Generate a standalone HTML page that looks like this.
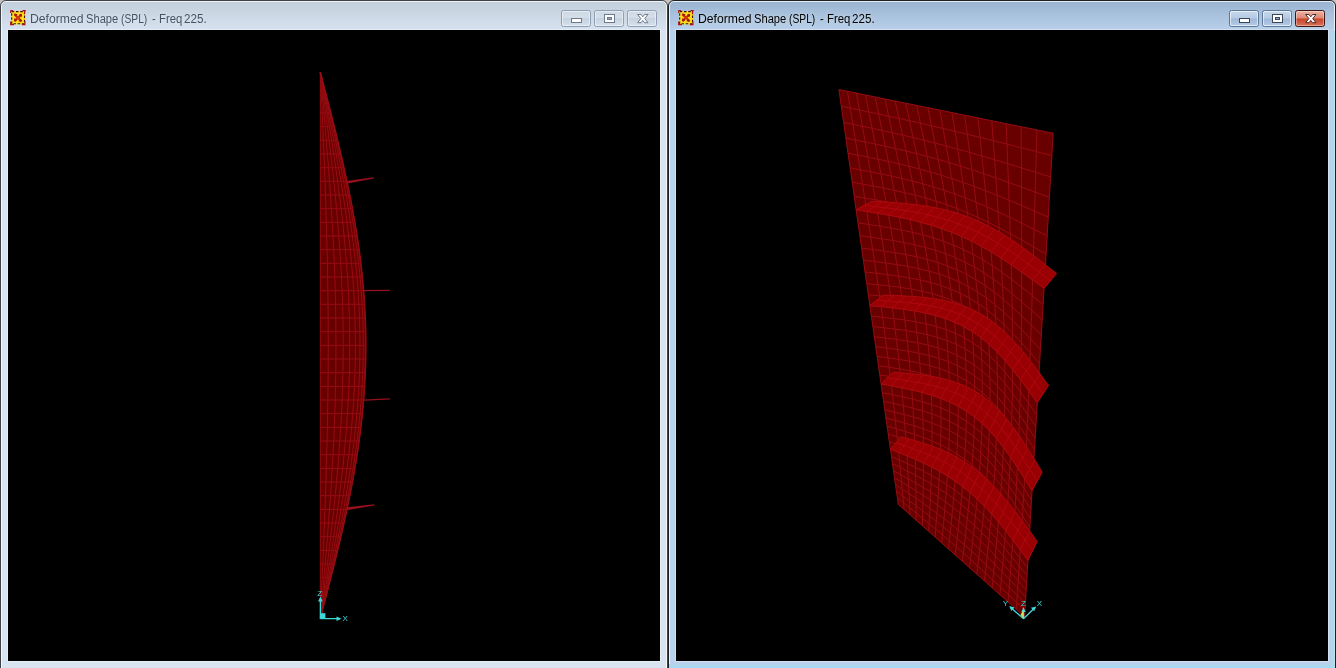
<!DOCTYPE html>
<html>
<head>
<meta charset="utf-8">
<title>Deformed Shape (SPL) - Freq 225.</title>
<style>
html,body{margin:0;padding:0;}
body{width:1336px;height:668px;overflow:hidden;background:#c4c2be;position:relative;font-family:"Liberation Sans",sans-serif;}
.win{position:absolute;top:0;width:668px;height:680px;box-sizing:border-box;border:1px solid #3f4349;border-radius:6px 6px 0 0;overflow:hidden;}
.win .hl{position:absolute;left:0;top:0;right:0;bottom:0;border:1px solid rgba(255,255,255,.75);border-radius:5px 5px 0 0;pointer-events:none;}
#w1{left:0;background:linear-gradient(#c3cfdb 0px,#c3cfdb 2px,#d6e2ef 29px,#d9e4f1 30px,#d9e4f1 100%);}
#w2{left:668px;border-color:#1e2124;background:linear-gradient(#9cb5d2 0px,#9cb5d2 2px,#b8d0ea 29px,#b9d1ea 30px,#b9d1ea 100%);}
.view{position:absolute;left:7px;top:29px;width:652px;height:631px;background:#000;box-shadow:0 0 0 1px rgba(255,255,255,.35);}
.view svg{position:absolute;left:0;top:0;}
.ticon{position:absolute;left:8.4px;top:8px;width:17.6px;height:17px;}
.title{position:absolute;left:0;top:10px;height:16px;line-height:16px;font-size:12px;white-space:nowrap;will-change:transform;}
.title span{position:absolute;top:0;display:block;transform-origin:0 0;white-space:pre;}
#w1 .title{color:#445364;text-shadow:0 0 5px rgba(255,255,255,.55);}
#w2 .title{color:#000;text-shadow:0 0 5px rgba(255,255,255,.55);}
.btn{position:absolute;top:9px;width:30px;height:17px;box-sizing:border-box;border:1px solid #8f9fb3;border-radius:2.5px;box-shadow:inset 0 0 0 1px rgba(255,255,255,.45);}
.btn svg{position:absolute;left:0;top:0;}
#w1 .btn{background:linear-gradient(rgba(255,255,255,.12) 0,rgba(255,255,255,.12) 50%,rgba(120,140,170,.10) 50%,rgba(255,255,255,.05) 100%);}
#w2 .btn{border-color:#5d7796;background:linear-gradient(#c4d7ec 0,#b6cbe4 48%,#9fb8d6 52%,#b4cbe6 100%);box-shadow:inset 0 0 0 1px rgba(255,255,255,.6);}
#w2 .btn.close{border-color:#431512;background:linear-gradient(#eab2a4 0,#df8874 48%,#c7432a 52%,#d9735a 100%);box-shadow:inset 0 0 0 1px rgba(255,255,255,.35);}
.b1{left:560px}.b2{left:593px}.b3{left:626px}
#w2 .edge{position:absolute;left:0;right:0;top:663px;height:6px;background:linear-gradient(#b9d1ea,#9edcf3 60%,#9edcf3);}
#w2 .redge{position:absolute;right:0;top:30px;width:5px;height:640px;background:linear-gradient(90deg,rgba(170,222,236,0),rgba(170,222,236,.9));}
</style>
</head>
<body>
<div class="win" id="w1">
  <div class="hl"></div>
  <svg class="ticon" viewBox="0 0 17 17" preserveAspectRatio="none"><rect x="2" y="2" width="13.6" height="13.4" fill="#ffdf1e"/>
<rect x="2.6" y="2.6" width="12.4" height="12.2" fill="none" stroke="#3c1200" stroke-width="1.1" stroke-dasharray="2.5 1.6"/>
<path d="M1.4 1.6h2.6M1.6 1.4v2.6M13 1.6h3.2M15 1.6v3.6M1.6 12.6v3h3.2M15.4 12.4v3.2h-3" stroke="#a81018" stroke-width="1.1" fill="none"/>
<path d="M5.2 5.2 L12.2 12.2 M12.2 5.2 L5.2 12.2" stroke="#c42806" stroke-width="2.1" fill="none"/>
<path d="M5 4.6l3.4 .6-2.6 2.4zM12.6 5l-.6 3.4-2.4-2.6zM12.2 12.8l-3.4-.6 2.6-2.4zM4.8 12.2l.6-3.4 2.4 2.6z" fill="#a01400"/>
<circle cx="8.7" cy="8.7" r="1.3" fill="#d83c10"/></svg>
  <div class="title"><span style="left:28.99px;transform:scaleX(1.016)">Deformed </span><span style="left:84.52px;transform:scaleX(0.929)">Shape </span><span style="left:119.76px;transform:scaleX(0.857)">(SPL) </span><span style="left:151.25px;transform:scaleX(0.938)">- </span><span style="left:158.03px;transform:scaleX(0.946)">Freq </span><span style="left:183.29px;transform:scaleX(0.969)">225.</span></div>
  <div class="btn b1"><svg width="28" height="15" viewBox="0 0 28 15"><rect x="9.5" y="7.5" width="10" height="4" fill="#fff" stroke="#6d7a8c" stroke-width="1"/></svg></div>
  <div class="btn b2"><svg width="28" height="15" viewBox="0 0 28 15"><rect x="9.5" y="3.5" width="10" height="8" fill="#fff" stroke="#6d7a8c" stroke-width="1"/><rect x="12.5" y="6.5" width="4" height="2" fill="#9aa9bd" stroke="#6d7a8c" stroke-width="1"/></svg></div>
  <div class="btn b3 close"><svg width="28" height="15" viewBox="0 0 28 15"><path d="M9.6 3.5 L13 3.5 L14.8 5.8 L16.6 3.5 L20 3.5 L16.7 7.6 L20 11.7 L16.6 11.7 L14.8 9.4 L13 11.7 L9.6 11.7 L12.9 7.6 Z" fill="#fff" stroke="#6d7a8c" stroke-width="1" stroke-linejoin="round"/></svg></div>
  <div class="view"><svg width="652" height="631" viewBox="0 0 652 631">
<polygon points="312.3,588.7 312.3,581.9 312.3,575.0 312.3,568.2 312.3,561.4 312.3,554.5 312.3,547.7 312.3,540.9 312.3,534.0 312.3,527.2 312.3,520.4 312.3,513.5 312.3,506.7 312.3,499.9 312.3,493.0 312.3,486.2 312.3,479.4 312.3,472.5 312.3,465.7 312.3,458.9 312.3,452.0 312.3,445.2 312.3,438.4 312.3,431.5 312.3,424.7 312.3,417.9 312.3,411.0 312.3,404.2 312.3,397.4 312.3,390.5 312.3,383.7 312.3,376.9 312.3,370.0 312.3,363.2 312.3,356.4 312.3,349.5 312.3,342.7 312.3,335.9 312.3,329.0 312.3,322.2 312.3,315.4 312.3,308.5 312.3,301.7 312.3,294.8 312.3,288.0 312.3,281.2 312.3,274.3 312.3,267.5 312.3,260.7 312.3,253.8 312.3,247.0 312.3,240.2 312.3,233.3 312.3,226.5 312.3,219.7 312.3,212.8 312.3,206.0 312.3,199.2 312.3,192.3 312.3,185.5 312.3,178.7 312.3,171.8 312.3,165.0 312.3,158.2 312.3,151.3 312.3,144.5 312.3,137.7 312.3,130.8 312.3,124.0 312.3,117.2 312.3,110.3 312.3,103.5 312.3,96.7 312.3,89.8 312.3,83.0 312.3,76.2 312.3,69.3 312.3,62.5 312.3,55.7 312.3,48.8 312.3,42.0 312.3,42.0 314.1,48.8 315.9,55.7 317.7,62.5 319.5,69.3 321.2,76.2 323.0,83.0 324.7,89.8 326.5,96.7 328.2,103.5 329.8,110.3 331.5,117.2 333.1,124.0 334.7,130.8 336.2,137.7 337.7,144.5 339.2,151.3 340.7,158.2 342.0,165.0 343.4,171.8 344.7,178.7 345.9,185.5 347.1,192.3 348.3,199.2 349.4,206.0 350.4,212.8 351.4,219.7 352.3,226.5 353.1,233.3 353.9,240.2 354.6,247.0 355.3,253.8 355.9,260.7 356.4,267.5 356.8,274.3 357.2,281.2 357.5,288.0 357.8,294.8 358.0,301.7 358.1,308.5 358.1,315.4 358.1,322.2 358.0,329.0 357.8,335.9 357.5,342.7 357.2,349.5 356.8,356.4 356.4,363.2 355.9,370.0 355.3,376.9 354.6,383.7 353.9,390.5 353.1,397.4 352.3,404.2 351.4,411.0 350.4,417.9 349.4,424.7 348.3,431.5 347.1,438.4 345.9,445.2 344.7,452.0 343.4,458.9 342.0,465.7 340.7,472.5 339.2,479.4 337.7,486.2 336.2,493.0 334.7,499.9 333.1,506.7 331.5,513.5 329.8,520.4 328.2,527.2 326.5,534.0 324.7,540.9 323.0,547.7 321.2,554.5 319.5,561.4 317.7,568.2 315.9,575.0 314.1,581.9 312.3,588.7" fill="#690000"/>
<path d="M312.3,588.7 L312.3,575.0 L312.3,561.4 L312.3,547.7 L312.3,534.0 L312.3,520.4 L312.3,506.7 L312.3,493.0 L312.3,479.4 L312.3,465.7 L312.3,452.0 L312.3,438.4 L312.3,424.7 L312.3,411.0 L312.3,397.4 L312.3,383.7 L312.3,370.0 L312.3,356.4 L312.3,342.7 L312.3,329.0 L312.3,315.4 L312.3,301.7 L312.3,288.0 L312.3,274.3 L312.3,260.7 L312.3,247.0 L312.3,233.3 L312.3,219.7 L312.3,206.0 L312.3,192.3 L312.3,178.7 L312.3,165.0 L312.3,151.3 L312.3,137.7 L312.3,124.0 L312.3,110.3 L312.3,96.7 L312.3,83.0 L312.3,69.3 L312.3,55.7 L312.3,42.0 M312.3,588.7 L312.9,575.0 L313.5,561.4 L314.2,547.7 L314.8,534.0 L315.3,520.4 L315.9,506.7 L316.5,493.0 L317.0,479.4 L317.5,465.7 L317.9,452.0 L318.3,438.4 L318.7,424.7 L319.1,411.0 L319.4,397.4 L319.6,383.7 L319.9,370.0 L320.0,356.4 L320.2,342.7 L320.2,329.0 L320.3,315.4 L320.2,301.7 L320.2,288.0 L320.0,274.3 L319.9,260.7 L319.6,247.0 L319.4,233.3 L319.1,219.7 L318.7,206.0 L318.3,192.3 L317.9,178.7 L317.5,165.0 L317.0,151.3 L316.5,137.7 L315.9,124.0 L315.3,110.3 L314.8,96.7 L314.2,83.0 L313.5,69.3 L312.9,55.7 L312.3,42.0 M312.3,588.7 L313.5,575.0 L314.8,561.4 L316.0,547.7 L317.1,534.0 L318.3,520.4 L319.4,506.7 L320.5,493.0 L321.5,479.4 L322.5,465.7 L323.4,452.0 L324.2,438.4 L325.0,424.7 L325.7,411.0 L326.3,397.4 L326.8,383.7 L327.2,370.0 L327.5,356.4 L327.8,342.7 L327.9,329.0 L328.0,315.4 L327.9,301.7 L327.8,288.0 L327.5,274.3 L327.2,260.7 L326.8,247.0 L326.3,233.3 L325.7,219.7 L325.0,206.0 L324.2,192.3 L323.4,178.7 L322.5,165.0 L321.5,151.3 L320.5,137.7 L319.4,124.0 L318.3,110.3 L317.1,96.7 L316.0,83.0 L314.8,69.3 L313.5,55.7 L312.3,42.0 M312.3,588.7 L314.1,575.0 L315.9,561.4 L317.6,547.7 L319.4,534.0 L321.1,520.4 L322.7,506.7 L324.3,493.0 L325.8,479.4 L327.2,465.7 L328.5,452.0 L329.7,438.4 L330.8,424.7 L331.8,411.0 L332.7,397.4 L333.5,383.7 L334.1,370.0 L334.6,356.4 L334.9,342.7 L335.1,329.0 L335.2,315.4 L335.1,301.7 L334.9,288.0 L334.6,274.3 L334.1,260.7 L333.5,247.0 L332.7,233.3 L331.8,219.7 L330.8,206.0 L329.7,192.3 L328.5,178.7 L327.2,165.0 L325.8,151.3 L324.3,137.7 L322.7,124.0 L321.1,110.3 L319.4,96.7 L317.6,83.0 L315.9,69.3 L314.1,55.7 L312.3,42.0 M312.3,588.7 L314.6,575.0 L316.9,561.4 L319.2,547.7 L321.4,534.0 L323.6,520.4 L325.7,506.7 L327.7,493.0 L329.6,479.4 L331.4,465.7 L333.1,452.0 L334.7,438.4 L336.1,424.7 L337.4,411.0 L338.5,397.4 L339.5,383.7 L340.3,370.0 L340.9,356.4 L341.4,342.7 L341.6,329.0 L341.7,315.4 L341.6,301.7 L341.4,288.0 L340.9,274.3 L340.3,260.7 L339.5,247.0 L338.5,233.3 L337.4,219.7 L336.1,206.0 L334.7,192.3 L333.1,178.7 L331.4,165.0 L329.6,151.3 L327.7,137.7 L325.7,124.0 L323.6,110.3 L321.4,96.7 L319.2,83.0 L316.9,69.3 L314.6,55.7 L312.3,42.0 M312.3,588.7 L315.1,575.0 L317.8,561.4 L320.5,547.7 L323.1,534.0 L325.7,520.4 L328.2,506.7 L330.6,493.0 L332.9,479.4 L335.1,465.7 L337.1,452.0 L339.0,438.4 L340.7,424.7 L342.2,411.0 L343.6,397.4 L344.7,383.7 L345.7,370.0 L346.4,356.4 L347.0,342.7 L347.3,329.0 L347.4,315.4 L347.3,301.7 L347.0,288.0 L346.4,274.3 L345.7,260.7 L344.7,247.0 L343.6,233.3 L342.2,219.7 L340.7,206.0 L339.0,192.3 L337.1,178.7 L335.1,165.0 L332.9,151.3 L330.6,137.7 L328.2,124.0 L325.7,110.3 L323.1,96.7 L320.5,83.0 L317.8,69.3 L315.1,55.7 L312.3,42.0 M312.3,588.7 L315.4,575.0 L318.5,561.4 L321.6,547.7 L324.6,534.0 L327.5,520.4 L330.3,506.7 L333.0,493.0 L335.6,479.4 L338.1,465.7 L340.3,452.0 L342.5,438.4 L344.4,424.7 L346.1,411.0 L347.6,397.4 L348.9,383.7 L350.0,370.0 L350.9,356.4 L351.5,342.7 L351.8,329.0 L352.0,315.4 L351.8,301.7 L351.5,288.0 L350.9,274.3 L350.0,260.7 L348.9,247.0 L347.6,233.3 L346.1,219.7 L344.4,206.0 L342.5,192.3 L340.3,178.7 L338.1,165.0 L335.6,151.3 L333.0,137.7 L330.3,124.0 L327.5,110.3 L324.6,96.7 L321.6,83.0 L318.5,69.3 L315.4,55.7 L312.3,42.0 M312.3,588.7 L315.7,575.0 L319.0,561.4 L322.3,547.7 L325.6,534.0 L328.8,520.4 L331.8,506.7 L334.8,493.0 L337.6,479.4 L340.3,465.7 L342.7,452.0 L345.0,438.4 L347.1,424.7 L349.0,411.0 L350.6,397.4 L352.1,383.7 L353.2,370.0 L354.1,356.4 L354.8,342.7 L355.2,329.0 L355.3,315.4 L355.2,301.7 L354.8,288.0 L354.1,274.3 L353.2,260.7 L352.1,247.0 L350.6,233.3 L349.0,219.7 L347.1,206.0 L345.0,192.3 L342.7,178.7 L340.3,165.0 L337.6,151.3 L334.8,137.7 L331.8,124.0 L328.8,110.3 L325.6,96.7 L322.3,83.0 L319.0,69.3 L315.7,55.7 L312.3,42.0 M312.3,588.7 L315.8,575.0 L319.4,561.4 L322.8,547.7 L326.2,534.0 L329.6,520.4 L332.8,506.7 L335.9,493.0 L338.8,479.4 L341.6,465.7 L344.2,452.0 L346.6,438.4 L348.8,424.7 L350.8,411.0 L352.5,397.4 L354.0,383.7 L355.2,370.0 L356.2,356.4 L356.8,342.7 L357.3,329.0 L357.4,315.4 L357.3,301.7 L356.8,288.0 L356.2,274.3 L355.2,260.7 L354.0,247.0 L352.5,233.3 L350.8,219.7 L348.8,206.0 L346.6,192.3 L344.2,178.7 L341.6,165.0 L338.8,151.3 L335.9,137.7 L332.8,124.0 L329.6,110.3 L326.2,96.7 L322.8,83.0 L319.4,69.3 L315.8,55.7 L312.3,42.0 M312.3,588.7 L315.9,575.0 L319.5,561.4 L323.0,547.7 L326.5,534.0 L329.8,520.4 L333.1,506.7 L336.2,493.0 L339.2,479.4 L342.0,465.7 L344.7,452.0 L347.1,438.4 L349.4,424.7 L351.4,411.0 L353.1,397.4 L354.6,383.7 L355.9,370.0 L356.8,356.4 L357.5,342.7 L358.0,329.0 L358.1,315.4 L358.0,301.7 L357.5,288.0 L356.8,274.3 L355.9,260.7 L354.6,247.0 L353.1,233.3 L351.4,219.7 L349.4,206.0 L347.1,192.3 L344.7,178.7 L342.0,165.0 L339.2,151.3 L336.2,137.7 L333.1,124.0 L329.8,110.3 L326.5,96.7 L323.0,83.0 L319.5,69.3 L315.9,55.7 L312.3,42.0 M312.3,575.0 L315.9,575.0 M312.3,561.4 L319.5,561.4 M312.3,547.7 L323.0,547.7 M312.3,534.0 L326.5,534.0 M312.3,520.4 L329.8,520.4 M312.3,506.7 L333.1,506.7 M312.3,493.0 L336.2,493.0 M312.3,479.4 L339.2,479.4 M312.3,465.7 L342.0,465.7 M312.3,452.0 L344.7,452.0 M312.3,438.4 L347.1,438.4 M312.3,424.7 L349.4,424.7 M312.3,411.0 L351.4,411.0 M312.3,397.4 L353.1,397.4 M312.3,383.7 L354.6,383.7 M312.3,370.0 L355.9,370.0 M312.3,356.4 L356.8,356.4 M312.3,342.7 L357.5,342.7 M312.3,329.0 L358.0,329.0 M312.3,315.4 L358.1,315.4 M312.3,301.7 L358.0,301.7 M312.3,288.0 L357.5,288.0 M312.3,274.3 L356.8,274.3 M312.3,260.7 L355.9,260.7 M312.3,247.0 L354.6,247.0 M312.3,233.3 L353.1,233.3 M312.3,219.7 L351.4,219.7 M312.3,206.0 L349.4,206.0 M312.3,192.3 L347.1,192.3 M312.3,178.7 L344.7,178.7 M312.3,165.0 L342.0,165.0 M312.3,151.3 L339.2,151.3 M312.3,137.7 L336.2,137.7 M312.3,124.0 L333.1,124.0 M312.3,110.3 L329.8,110.3 M312.3,96.7 L326.5,96.7 M312.3,83.0 L323.0,83.0 M312.3,69.3 L319.5,69.3 M312.3,55.7 L315.9,55.7" fill="none" stroke="#960c12" stroke-width="1"/>
<polygon points="338.4,151.1 365.8,147.3 365.8,148.5 338.4,153.7" fill="#98101c"/>
<polygon points="355.0,260.0 381.8,259.7 381.8,260.9 355.0,261.2" fill="#98101c"/>
<polygon points="356.0,369.4 381.9,368.3 381.9,369.5 356.0,370.8" fill="#98101c"/>
<polygon points="338.8,477.2 366.5,474.2 366.5,475.4 338.8,480.2" fill="#98101c"/>
<g stroke="#3fd7d7" fill="#3fd7d7" stroke-width="1.3">
<path d="M312.4,588.7 V569 M312.4,588.7 H331" fill="none"/>
<path d="M312.4,566.5 l-2.3,5 h4.6z M333.5,588.7 l-5,-2.3 v4.6z" stroke="none"/>
<rect x="312.4" y="583.2" width="5" height="5" stroke="none"/>
</g>
<text x="309.2" y="566" font-family="Liberation Sans,sans-serif" font-size="8" font-weight="normal" fill="#3fd7d7">Z</text>
<text x="334.5" y="590.8" font-family="Liberation Sans,sans-serif" font-size="8" font-weight="normal" fill="#3fd7d7">X</text>
  </svg></div>
</div>
<div class="win" id="w2">
  <div class="hl"></div>
  <div class="edge"></div><div class="redge"></div>
  <svg class="ticon" viewBox="0 0 17 17" preserveAspectRatio="none"><rect x="2" y="2" width="13.6" height="13.4" fill="#ffdf1e"/>
<rect x="2.6" y="2.6" width="12.4" height="12.2" fill="none" stroke="#3c1200" stroke-width="1.1" stroke-dasharray="2.5 1.6"/>
<path d="M1.4 1.6h2.6M1.6 1.4v2.6M13 1.6h3.2M15 1.6v3.6M1.6 12.6v3h3.2M15.4 12.4v3.2h-3" stroke="#a81018" stroke-width="1.1" fill="none"/>
<path d="M5.2 5.2 L12.2 12.2 M12.2 5.2 L5.2 12.2" stroke="#c42806" stroke-width="2.1" fill="none"/>
<path d="M5 4.6l3.4 .6-2.6 2.4zM12.6 5l-.6 3.4-2.4-2.6zM12.2 12.8l-3.4-.6 2.6-2.4zM4.8 12.2l.6-3.4 2.4 2.6z" fill="#a01400"/>
<circle cx="8.7" cy="8.7" r="1.3" fill="#d83c10"/></svg>
  <div class="title"><span style="left:28.99px;transform:scaleX(1.016)">Deformed </span><span style="left:84.52px;transform:scaleX(0.929)">Shape </span><span style="left:119.76px;transform:scaleX(0.857)">(SPL) </span><span style="left:151.25px;transform:scaleX(0.938)">- </span><span style="left:158.03px;transform:scaleX(0.946)">Freq </span><span style="left:183.29px;transform:scaleX(0.969)">225.</span></div>
  <div class="btn b1"><svg width="28" height="15" viewBox="0 0 28 15"><rect x="9.5" y="7.5" width="10" height="4" fill="#fff" stroke="#3a4758" stroke-width="1"/></svg></div>
  <div class="btn b2"><svg width="28" height="15" viewBox="0 0 28 15"><rect x="9.5" y="3.5" width="10" height="8" fill="#fff" stroke="#3a4758" stroke-width="1"/><rect x="12.5" y="6.5" width="4" height="2" fill="#9aa9bd" stroke="#3a4758" stroke-width="1"/></svg></div>
  <div class="btn b3 close"><svg width="28" height="15" viewBox="0 0 28 15"><path d="M9.6 3.5 L13 3.5 L14.8 5.8 L16.6 3.5 L20 3.5 L16.7 7.6 L20 11.7 L16.6 11.7 L14.8 9.4 L13 11.7 L9.6 11.7 L12.9 7.6 Z" fill="#fff" stroke="#4a2a28" stroke-width="1" stroke-linejoin="round"/></svg></div>
  <div class="view"><svg width="652" height="631" viewBox="0 0 652 631">
<polygon points="348.6,586.8 344.4,583.0 340.2,579.3 336.0,575.6 332.0,571.9 327.9,568.3 323.9,564.8 320.0,561.3 316.1,557.8 312.2,554.3 308.4,550.9 304.6,547.6 300.9,544.2 297.2,541.0 293.5,537.7 289.9,534.5 286.3,531.3 282.8,528.2 279.3,525.1 275.9,522.0 272.4,518.9 269.0,515.9 265.7,512.9 262.4,510.0 259.1,507.1 255.9,504.2 252.7,501.3 249.5,498.5 246.3,495.7 243.2,492.9 240.1,490.2 237.1,487.5 234.1,484.8 231.1,482.1 228.1,479.5 225.2,476.9 222.3,474.3 222.3,474.3 221.8,471.1 221.4,467.9 220.9,464.6 220.4,461.3 220.0,458.0 219.5,454.6 219.0,451.2 218.5,447.8 218.0,444.4 217.5,440.9 217.0,437.3 216.5,433.8 216.0,430.2 215.5,426.5 214.9,422.9 214.4,419.1 213.9,415.4 213.3,411.6 212.8,407.8 212.2,403.9 211.7,400.0 211.1,396.0 210.5,392.0 209.9,388.0 209.4,383.9 208.8,379.7 208.2,375.6 207.6,371.3 206.9,367.1 206.3,362.7 205.7,358.4 205.1,353.9 204.4,349.5 203.8,344.9 203.1,340.4 202.5,335.7 201.8,331.0 201.1,326.3 200.4,321.5 199.7,316.6 199.0,311.7 198.3,306.8 197.6,301.7 196.9,296.6 196.1,291.5 195.4,286.2 194.6,280.9 193.9,275.6 193.1,270.2 192.3,264.7 191.5,259.1 190.7,253.5 189.9,247.8 189.0,242.0 188.2,236.1 187.4,230.2 186.5,224.2 185.6,218.1 184.7,211.9 183.8,205.6 182.9,199.3 182.0,192.8 181.1,186.3 180.1,179.7 179.2,173.0 178.2,166.2 177.2,159.3 176.2,152.3 175.2,145.1 174.2,137.9 173.1,130.6 172.0,123.2 171.0,115.7 169.9,108.0 168.8,100.2 167.6,92.4 166.5,84.4 165.3,76.2 164.1,68.0 162.9,59.6 162.9,59.6 167.2,60.4 171.5,61.3 176.0,62.2 180.4,63.1 185.0,64.1 189.6,65.0 194.3,66.0 199.1,66.9 204.0,67.9 209.0,69.0 214.0,70.0 219.1,71.0 224.4,72.1 229.7,73.2 235.1,74.3 240.6,75.4 246.3,76.6 252.0,77.7 257.8,78.9 263.8,80.1 269.8,81.4 276.0,82.6 282.3,83.9 288.7,85.2 295.3,86.5 302.0,87.9 308.8,89.3 315.8,90.7 322.9,92.2 330.2,93.7 337.6,95.2 345.2,96.7 352.9,98.3 360.9,99.9 369.0,101.5 377.2,103.2 377.2,103.2 376.6,114.5 375.9,125.6 375.3,136.4 374.6,146.9 374.0,157.3 373.4,167.4 372.8,177.3 372.3,187.1 371.7,196.6 371.2,205.9 370.6,215.1 370.1,224.1 369.6,232.8 369.1,241.5 368.6,249.9 368.1,258.3 367.6,266.4 367.1,274.4 366.6,282.3 366.2,290.0 365.7,297.5 365.3,305.0 364.9,312.3 364.4,319.5 364.0,326.5 363.6,333.4 363.2,340.3 362.8,347.0 362.4,353.5 362.0,360.0 361.7,366.4 361.3,372.7 360.9,378.8 360.6,384.9 360.2,390.9 359.9,396.7 359.5,402.5 359.2,408.2 358.9,413.8 358.5,419.3 358.2,424.7 357.9,430.1 357.6,435.4 357.3,440.6 357.0,445.7 356.7,450.7 356.4,455.7 356.1,460.6 355.8,465.4 355.5,470.1 355.2,474.8 355.0,479.4 354.7,484.0 354.4,488.5 354.2,492.9 353.9,497.3 353.7,501.6 353.4,505.9 353.2,510.1 352.9,514.2 352.7,518.3 352.4,522.3 352.2,526.3 352.0,530.2 351.7,534.1 351.5,537.9 351.3,541.7 351.1,545.4 350.8,549.1 350.6,552.8 350.4,556.3 350.2,559.9 350.0,563.4 349.8,566.9 349.6,570.3 349.4,573.7 349.2,577.0 349.0,580.3 348.8,583.6 348.6,586.8" fill="#690000"/>
<path d="M348.6,586.8 L349.0,580.3 L349.4,573.7 L349.8,566.9 L350.2,559.9 L350.6,552.8 L351.1,545.4 L351.5,537.9 L352.0,530.2 L352.4,522.3 L352.9,514.2 L353.4,505.9 L353.9,497.3 L354.4,488.5 L355.0,479.4 L355.5,470.1 L356.1,460.6 L356.7,450.7 L357.3,440.6 L357.9,430.1 L358.5,419.3 L359.2,408.2 L359.9,396.7 L360.6,384.9 L361.3,372.7 L362.0,360.0 L362.8,347.0 L363.6,333.4 L364.4,319.5 L365.3,305.0 L366.2,290.0 L367.1,274.4 L368.1,258.3 L369.1,241.5 L370.1,224.1 L371.2,205.9 L372.3,187.1 L373.4,167.4 L374.6,146.9 L375.9,125.6 L377.2,103.2 M340.2,579.3 L340.7,572.4 L341.2,565.4 L341.7,558.2 L342.2,550.9 L342.7,543.4 L343.2,535.8 L343.8,527.9 L344.3,519.9 L344.8,511.7 L345.4,503.3 L345.9,494.8 L346.5,486.0 L347.0,477.0 L347.5,467.8 L348.1,458.3 L348.6,448.6 L349.2,438.7 L349.7,428.4 L350.2,418.0 L350.7,407.2 L351.2,396.1 L351.8,384.7 L352.3,372.9 L352.8,360.8 L353.3,348.5 L353.7,335.8 L354.2,322.6 L354.7,309.1 L355.2,295.1 L355.7,280.5 L356.2,265.5 L356.6,249.9 L357.1,233.7 L357.6,216.9 L358.1,199.4 L358.6,181.1 L359.2,162.1 L359.7,142.3 L360.3,121.6 L360.9,99.9 M332.0,571.9 L332.6,564.7 L333.2,557.4 L333.8,549.9 L334.4,542.2 L335.0,534.4 L335.6,526.5 L336.3,518.4 L336.9,510.1 L337.5,501.6 L338.1,493.0 L338.7,484.2 L339.3,475.3 L339.8,466.1 L340.4,456.7 L340.9,447.2 L341.4,437.4 L341.9,427.3 L342.4,417.1 L342.8,406.6 L343.2,395.8 L343.6,384.8 L344.0,373.4 L344.3,361.8 L344.6,349.8 L344.8,337.7 L345.1,325.3 L345.3,312.5 L345.4,299.4 L345.5,285.8 L345.6,271.7 L345.7,257.1 L345.7,242.0 L345.7,226.4 L345.7,210.1 L345.7,193.2 L345.6,175.5 L345.5,157.1 L345.4,137.9 L345.3,117.8 L345.2,96.7 M323.9,564.8 L324.6,557.3 L325.3,549.6 L326.1,541.8 L326.8,533.9 L327.5,525.8 L328.2,517.6 L328.9,509.3 L329.6,500.8 L330.3,492.1 L331.0,483.3 L331.6,474.4 L332.3,465.2 L332.8,455.9 L333.4,446.4 L333.9,436.8 L334.4,426.9 L334.9,416.8 L335.3,406.5 L335.6,396.0 L335.9,385.3 L336.2,374.3 L336.4,363.0 L336.5,351.4 L336.6,339.6 L336.7,327.8 L336.7,315.7 L336.6,303.2 L336.4,290.4 L336.2,277.1 L336.0,263.5 L335.6,249.4 L335.2,234.7 L334.8,219.5 L334.3,203.8 L333.7,187.3 L333.1,170.2 L332.5,152.4 L331.7,133.7 L331.0,114.1 L330.2,93.7 M316.1,557.8 L316.9,550.0 L317.7,542.1 L318.5,534.1 L319.3,525.9 L320.1,517.6 L320.9,509.2 L321.7,500.7 L322.5,492.0 L323.3,483.2 L324.0,474.2 L324.7,465.1 L325.3,455.9 L325.9,446.5 L326.5,436.9 L327.0,427.2 L327.4,417.3 L327.8,407.2 L328.2,396.9 L328.5,386.3 L328.7,375.6 L328.8,364.6 L328.9,353.4 L328.9,342.0 L328.8,330.2 L328.6,318.7 L328.4,306.8 L328.0,294.6 L327.6,282.1 L327.1,269.2 L326.5,255.9 L325.8,242.2 L325.0,227.9 L324.2,213.2 L323.2,197.9 L322.2,181.9 L321.1,165.3 L319.9,147.9 L318.6,129.7 L317.2,110.7 L315.8,90.7 M308.4,550.9 L309.3,543.0 L310.2,534.9 L311.1,526.6 L312.0,518.3 L312.9,509.8 L313.7,501.3 L314.6,492.6 L315.4,483.8 L316.2,474.8 L317.0,465.8 L317.7,456.6 L318.4,447.3 L319.0,437.8 L319.5,428.2 L320.0,418.4 L320.4,408.5 L320.8,398.3 L321.1,388.0 L321.3,377.5 L321.4,366.8 L321.4,355.9 L321.3,344.8 L321.2,333.4 L320.9,321.8 L320.6,310.4 L320.1,298.8 L319.5,286.8 L318.9,274.6 L318.1,262.0 L317.2,249.0 L316.2,235.6 L315.0,221.7 L313.8,207.3 L312.4,192.4 L311.0,176.8 L309.4,160.6 L307.7,143.7 L305.9,126.0 L304.0,107.4 L302.0,87.9 M300.9,544.2 L301.8,536.1 L302.8,527.9 L303.7,519.5 L304.7,511.1 L305.6,502.5 L306.6,493.8 L307.5,485.0 L308.3,476.1 L309.1,467.1 L309.9,458.0 L310.7,448.7 L311.3,439.4 L311.9,429.9 L312.5,420.2 L312.9,410.4 L313.3,400.5 L313.6,390.4 L313.8,380.1 L313.9,369.6 L314.0,359.0 L313.9,348.1 L313.7,337.0 L313.4,325.7 L312.9,314.2 L312.4,303.0 L311.8,291.5 L311.0,279.8 L310.1,267.8 L309.0,255.5 L307.9,242.8 L306.6,229.6 L305.1,216.0 L303.6,202.0 L301.9,187.4 L300.0,172.2 L298.0,156.3 L295.9,139.8 L293.7,122.4 L291.3,104.3 L288.7,85.2 M293.5,537.7 L294.5,529.5 L295.5,521.2 L296.5,512.7 L297.5,504.2 L298.4,495.6 L299.4,486.8 L300.3,478.0 L301.2,469.1 L302.0,460.0 L302.8,450.8 L303.5,441.6 L304.2,432.2 L304.7,422.7 L305.2,413.0 L305.7,403.2 L306.0,393.3 L306.2,383.2 L306.4,373.0 L306.4,362.5 L306.3,351.9 L306.1,341.1 L305.8,330.1 L305.3,318.9 L304.8,307.4 L304.1,296.4 L303.3,285.1 L302.3,273.6 L301.2,261.8 L299.9,249.6 L298.5,237.1 L297.0,224.2 L295.3,210.9 L293.4,197.1 L291.4,182.8 L289.2,167.8 L286.9,152.3 L284.4,136.1 L281.8,119.1 L279.0,101.3 L276.0,82.6 M286.3,531.3 L287.3,523.1 L288.3,514.7 L289.3,506.3 L290.3,497.7 L291.3,489.0 L292.2,480.3 L293.1,471.5 L293.9,462.5 L294.7,453.5 L295.5,444.3 L296.2,435.1 L296.8,425.7 L297.3,416.2 L297.8,406.6 L298.1,396.8 L298.4,386.9 L298.6,376.9 L298.6,366.7 L298.5,356.3 L298.4,345.7 L298.1,335.0 L297.6,324.1 L297.0,312.9 L296.3,301.5 L295.5,290.6 L294.5,279.5 L293.4,268.1 L292.1,256.4 L290.6,244.4 L289.0,232.1 L287.3,219.4 L285.3,206.3 L283.2,192.7 L281.0,178.5 L278.5,163.9 L275.9,148.6 L273.1,132.6 L270.2,116.0 L267.1,98.5 L263.8,80.1 M279.3,525.1 L280.3,516.8 L281.2,508.5 L282.2,500.1 L283.1,491.5 L284.0,482.9 L284.9,474.2 L285.8,465.4 L286.6,456.5 L287.3,447.5 L288.0,438.4 L288.6,429.2 L289.2,419.8 L289.7,410.4 L290.0,400.8 L290.3,391.1 L290.5,381.3 L290.6,371.3 L290.5,361.1 L290.4,350.8 L290.1,340.3 L289.7,329.7 L289.1,318.8 L288.4,307.7 L287.6,296.4 L286.6,285.6 L285.5,274.6 L284.2,263.3 L282.8,251.7 L281.2,239.9 L279.4,227.7 L277.5,215.1 L275.3,202.1 L273.1,188.7 L270.6,174.7 L267.9,160.2 L265.1,145.2 L262.1,129.4 L258.9,113.0 L255.5,95.8 L252.0,77.7 M272.4,518.9 L273.3,510.8 L274.2,502.5 L275.1,494.2 L275.9,485.7 L276.8,477.2 L277.6,468.5 L278.3,459.8 L279.1,451.0 L279.7,442.0 L280.3,433.0 L280.9,423.9 L281.3,414.6 L281.7,405.2 L282.0,395.7 L282.2,386.1 L282.3,376.3 L282.2,366.4 L282.1,356.3 L281.8,346.1 L281.4,335.7 L280.9,325.1 L280.2,314.3 L279.4,303.3 L278.5,292.1 L277.4,281.3 L276.1,270.4 L274.7,259.1 L273.2,247.6 L271.5,235.9 L269.6,223.7 L267.5,211.3 L265.2,198.4 L262.8,185.1 L260.2,171.3 L257.4,156.9 L254.4,142.0 L251.2,126.4 L247.9,110.2 L244.4,93.2 L240.6,75.4 M265.7,512.9 L266.5,504.9 L267.2,496.8 L268.0,488.5 L268.7,480.2 L269.5,471.8 L270.1,463.3 L270.8,454.6 L271.4,445.9 L272.0,437.1 L272.4,428.2 L272.9,419.1 L273.2,409.9 L273.5,400.7 L273.6,391.3 L273.7,381.7 L273.7,372.0 L273.5,362.2 L273.3,352.2 L272.9,342.0 L272.4,331.7 L271.7,321.2 L271.0,310.5 L270.0,299.6 L269.0,288.4 L267.8,277.7 L266.4,266.8 L264.9,255.6 L263.3,244.1 L261.5,232.4 L259.5,220.3 L257.3,207.9 L255.0,195.1 L252.4,181.8 L249.7,168.1 L246.9,153.9 L243.8,139.1 L240.5,123.6 L237.1,107.6 L233.5,90.8 L229.7,73.2 M259.1,507.1 L259.7,499.2 L260.3,491.2 L260.9,483.2 L261.5,475.0 L262.1,466.7 L262.6,458.3 L263.1,449.8 L263.6,441.3 L264.0,432.6 L264.3,423.8 L264.6,414.8 L264.8,405.8 L264.9,396.6 L264.9,387.3 L264.9,377.9 L264.7,368.3 L264.4,358.6 L264.1,348.7 L263.6,338.6 L262.9,328.3 L262.2,317.9 L261.3,307.3 L260.3,296.4 L259.1,285.4 L257.8,274.7 L256.4,263.7 L254.8,252.6 L253.1,241.1 L251.2,229.4 L249.1,217.4 L246.9,204.9 L244.5,192.2 L242.0,178.9 L239.2,165.2 L236.3,151.1 L233.2,136.3 L230.0,121.0 L226.5,105.1 L222.9,88.4 L219.1,71.0 M252.7,501.3 L253.1,493.6 L253.5,485.9 L253.9,478.0 L254.3,470.0 L254.7,461.9 L255.0,453.7 L255.3,445.4 L255.6,437.0 L255.8,428.4 L256.0,419.8 L256.1,411.0 L256.1,402.1 L256.1,393.1 L255.9,383.9 L255.7,374.6 L255.4,365.1 L255.0,355.5 L254.5,345.7 L253.8,335.7 L253.1,325.5 L252.2,315.2 L251.2,304.6 L250.1,293.9 L248.9,282.9 L247.5,272.2 L246.0,261.2 L244.4,250.0 L242.6,238.6 L240.7,226.8 L238.6,214.8 L236.4,202.3 L234.0,189.5 L231.4,176.3 L228.7,162.7 L225.8,148.5 L222.8,133.8 L219.6,118.6 L216.2,102.7 L212.7,86.2 L209.0,69.0 M246.3,495.7 L246.5,488.2 L246.7,480.7 L246.9,473.0 L247.1,465.2 L247.2,457.4 L247.4,449.4 L247.4,441.2 L247.5,433.0 L247.5,424.6 L247.5,416.2 L247.3,407.5 L247.2,398.8 L246.9,389.9 L246.6,380.9 L246.2,371.7 L245.8,362.3 L245.2,352.8 L244.5,343.1 L243.8,333.2 L242.9,323.2 L241.9,312.9 L240.8,302.4 L239.6,291.7 L238.3,280.8 L236.9,270.1 L235.3,259.1 L233.6,247.9 L231.8,236.4 L229.9,224.6 L227.8,212.5 L225.6,200.1 L223.3,187.2 L220.8,174.0 L218.1,160.3 L215.3,146.1 L212.4,131.5 L209.3,116.2 L206.0,100.5 L202.7,84.0 L199.1,66.9 M240.1,490.2 L240.1,483.0 L240.0,475.7 L240.0,468.2 L239.9,460.7 L239.8,453.0 L239.6,445.2 L239.5,437.3 L239.3,429.3 L239.0,421.1 L238.8,412.8 L238.4,404.4 L238.0,395.8 L237.6,387.1 L237.1,378.2 L236.5,369.1 L235.8,359.9 L235.1,350.5 L234.3,340.9 L233.4,331.2 L232.4,321.2 L231.3,311.0 L230.1,300.6 L228.8,290.0 L227.4,279.2 L225.9,268.4 L224.4,257.4 L222.7,246.1 L220.9,234.6 L219.0,222.7 L216.9,210.5 L214.8,198.0 L212.5,185.1 L210.1,171.8 L207.5,158.1 L204.9,143.9 L202.1,129.2 L199.2,114.1 L196.1,98.3 L192.9,82.0 L189.6,65.0 M234.1,484.8 L233.7,477.8 L233.4,470.8 L233.1,463.6 L232.7,456.3 L232.3,448.9 L231.9,441.3 L231.5,433.6 L231.0,425.8 L230.5,417.8 L230.0,409.7 L229.4,401.5 L228.7,393.0 L228.1,384.5 L227.3,375.7 L226.5,366.8 L225.7,357.8 L224.8,348.5 L223.8,339.0 L222.7,329.4 L221.6,319.5 L220.4,309.4 L219.1,299.1 L217.8,288.6 L216.3,277.8 L214.8,267.0 L213.2,255.9 L211.5,244.6 L209.7,233.0 L207.9,221.0 L205.9,208.8 L203.8,196.2 L201.7,183.2 L199.4,169.8 L197.0,156.0 L194.5,141.8 L191.9,127.1 L189.2,112.0 L186.4,96.3 L183.5,80.0 L180.4,63.1 M228.1,479.5 L227.5,472.8 L226.9,466.0 L226.2,459.1 L225.6,452.0 L224.9,444.8 L224.2,437.5 L223.4,430.0 L222.7,422.4 L221.9,414.7 L221.1,406.8 L220.2,398.7 L219.3,390.5 L218.4,382.1 L217.5,373.5 L216.5,364.7 L215.4,355.8 L214.3,346.7 L213.2,337.3 L212.0,327.8 L210.7,318.0 L209.4,308.0 L208.0,297.8 L206.6,287.4 L205.1,276.6 L203.6,265.8 L202.0,254.7 L200.3,243.2 L198.5,231.5 L196.7,219.5 L194.8,207.2 L192.9,194.5 L190.8,181.4 L188.7,168.0 L186.5,154.1 L184.2,139.8 L181.9,125.1 L179.4,110.0 L176.9,94.3 L174.3,78.1 L171.5,61.3 M222.3,474.3 L221.4,467.9 L220.4,461.3 L219.5,454.6 L218.5,447.8 L217.5,440.9 L216.5,433.8 L215.5,426.5 L214.4,419.1 L213.3,411.6 L212.2,403.9 L211.1,396.0 L209.9,388.0 L208.8,379.7 L207.6,371.3 L206.3,362.7 L205.1,353.9 L203.8,344.9 L202.5,335.7 L201.1,326.3 L199.7,316.6 L198.3,306.8 L196.9,296.6 L195.4,286.2 L193.9,275.6 L192.3,264.7 L190.7,253.5 L189.0,242.0 L187.4,230.2 L185.6,218.1 L183.8,205.6 L182.0,192.8 L180.1,179.7 L178.2,166.2 L176.2,152.3 L174.2,137.9 L172.0,123.2 L169.9,108.0 L167.6,92.4 L165.3,76.2 L162.9,59.6 M348.6,586.8 L340.2,579.3 L332.0,571.9 L323.9,564.8 L316.1,557.8 L308.4,550.9 L300.9,544.2 L293.5,537.7 L286.3,531.3 L279.3,525.1 L272.4,518.9 L265.7,512.9 L259.1,507.1 L252.7,501.3 L246.3,495.7 L240.1,490.2 L234.1,484.8 L228.1,479.5 L222.3,474.3 M349.0,580.3 L340.7,572.4 L332.6,564.7 L324.6,557.3 L316.9,550.0 L309.3,543.0 L301.8,536.1 L294.5,529.5 L287.3,523.1 L280.3,516.8 L273.3,510.8 L266.5,504.9 L259.7,499.2 L253.1,493.6 L246.5,488.2 L240.1,483.0 L233.7,477.8 L227.5,472.8 L221.4,467.9 M349.4,573.7 L341.2,565.4 L333.2,557.4 L325.3,549.6 L317.7,542.1 L310.2,534.9 L302.8,527.9 L295.5,521.2 L288.3,514.7 L281.2,508.5 L274.2,502.5 L267.2,496.8 L260.3,491.2 L253.5,485.9 L246.7,480.7 L240.0,475.7 L233.4,470.8 L226.9,466.0 L220.4,461.3 M349.8,566.9 L341.7,558.2 L333.8,549.9 L326.1,541.8 L318.5,534.1 L311.1,526.6 L303.7,519.5 L296.5,512.7 L289.3,506.3 L282.2,500.1 L275.1,494.2 L268.0,488.5 L260.9,483.2 L253.9,478.0 L246.9,473.0 L240.0,468.2 L233.1,463.6 L226.2,459.1 L219.5,454.6 M350.2,559.9 L342.2,550.9 L334.4,542.2 L326.8,533.9 L319.3,525.9 L312.0,518.3 L304.7,511.1 L297.5,504.2 L290.3,497.7 L283.1,491.5 L275.9,485.7 L268.7,480.2 L261.5,475.0 L254.3,470.0 L247.1,465.2 L239.9,460.7 L232.7,456.3 L225.6,452.0 L218.5,447.8 M350.6,552.8 L342.7,543.4 L335.0,534.4 L327.5,525.8 L320.1,517.6 L312.9,509.8 L305.6,502.5 L298.4,495.6 L291.3,489.0 L284.0,482.9 L276.8,477.2 L269.5,471.8 L262.1,466.7 L254.7,461.9 L247.2,457.4 L239.8,453.0 L232.3,448.9 L224.9,444.8 L217.5,440.9 M351.1,545.4 L343.2,535.8 L335.6,526.5 L328.2,517.6 L320.9,509.2 L313.7,501.3 L306.6,493.8 L299.4,486.8 L292.2,480.3 L284.9,474.2 L277.6,468.5 L270.1,463.3 L262.6,458.3 L255.0,453.7 L247.4,449.4 L239.6,445.2 L231.9,441.3 L224.2,437.5 L216.5,433.8 M351.5,537.9 L343.8,527.9 L336.3,518.4 L328.9,509.3 L321.7,500.7 L314.6,492.6 L307.5,485.0 L300.3,478.0 L293.1,471.5 L285.8,465.4 L278.3,459.8 L270.8,454.6 L263.1,449.8 L255.3,445.4 L247.4,441.2 L239.5,437.3 L231.5,433.6 L223.4,430.0 L215.5,426.5 M352.0,530.2 L344.3,519.9 L336.9,510.1 L329.6,500.8 L322.5,492.0 L315.4,483.8 L308.3,476.1 L301.2,469.1 L293.9,462.5 L286.6,456.5 L279.1,451.0 L271.4,445.9 L263.6,441.3 L255.6,437.0 L247.5,433.0 L239.3,429.3 L231.0,425.8 L222.7,422.4 L214.4,419.1 M352.4,522.3 L344.8,511.7 L337.5,501.6 L330.3,492.1 L323.3,483.2 L316.2,474.8 L309.1,467.1 L302.0,460.0 L294.7,453.5 L287.3,447.5 L279.7,442.0 L272.0,437.1 L264.0,432.6 L255.8,428.4 L247.5,424.6 L239.0,421.1 L230.5,417.8 L221.9,414.7 L213.3,411.6 M352.9,514.2 L345.4,503.3 L338.1,493.0 L331.0,483.3 L324.0,474.2 L317.0,465.8 L309.9,458.0 L302.8,450.8 L295.5,444.3 L288.0,438.4 L280.3,433.0 L272.4,428.2 L264.3,423.8 L256.0,419.8 L247.5,416.2 L238.8,412.8 L230.0,409.7 L221.1,406.8 L212.2,403.9 M353.4,505.9 L345.9,494.8 L338.7,484.2 L331.6,474.4 L324.7,465.1 L317.7,456.6 L310.7,448.7 L303.5,441.6 L296.2,435.1 L288.6,429.2 L280.9,423.9 L272.9,419.1 L264.6,414.8 L256.1,411.0 L247.3,407.5 L238.4,404.4 L229.4,401.5 L220.2,398.7 L211.1,396.0 M353.9,497.3 L346.5,486.0 L339.3,475.3 L332.3,465.2 L325.3,455.9 L318.4,447.3 L311.3,439.4 L304.2,432.2 L296.8,425.7 L289.2,419.8 L281.3,414.6 L273.2,409.9 L264.8,405.8 L256.1,402.1 L247.2,398.8 L238.0,395.8 L228.7,393.0 L219.3,390.5 L209.9,388.0 M354.4,488.5 L347.0,477.0 L339.8,466.1 L332.8,455.9 L325.9,446.5 L319.0,437.8 L311.9,429.9 L304.7,422.7 L297.3,416.2 L289.7,410.4 L281.7,405.2 L273.5,400.7 L264.9,396.6 L256.1,393.1 L246.9,389.9 L237.6,387.1 L228.1,384.5 L218.4,382.1 L208.8,379.7 M355.0,479.4 L347.5,467.8 L340.4,456.7 L333.4,446.4 L326.5,436.9 L319.5,428.2 L312.5,420.2 L305.2,413.0 L297.8,406.6 L290.0,400.8 L282.0,395.7 L273.6,391.3 L264.9,387.3 L255.9,383.9 L246.6,380.9 L237.1,378.2 L227.3,375.7 L217.5,373.5 L207.6,371.3 M355.5,470.1 L348.1,458.3 L340.9,447.2 L333.9,436.8 L327.0,427.2 L320.0,418.4 L312.9,410.4 L305.7,403.2 L298.1,396.8 L290.3,391.1 L282.2,386.1 L273.7,381.7 L264.9,377.9 L255.7,374.6 L246.2,371.7 L236.5,369.1 L226.5,366.8 L216.5,364.7 L206.3,362.7 M356.1,460.6 L348.6,448.6 L341.4,437.4 L334.4,426.9 L327.4,417.3 L320.4,408.5 L313.3,400.5 L306.0,393.3 L298.4,386.9 L290.5,381.3 L282.3,376.3 L273.7,372.0 L264.7,368.3 L255.4,365.1 L245.8,362.3 L235.8,359.9 L225.7,357.8 L215.4,355.8 L205.1,353.9 M356.7,450.7 L349.2,438.7 L341.9,427.3 L334.9,416.8 L327.8,407.2 L320.8,398.3 L313.6,390.4 L306.2,383.2 L298.6,376.9 L290.6,371.3 L282.2,366.4 L273.5,362.2 L264.4,358.6 L255.0,355.5 L245.2,352.8 L235.1,350.5 L224.8,348.5 L214.3,346.7 L203.8,344.9 M357.3,440.6 L349.7,428.4 L342.4,417.1 L335.3,406.5 L328.2,396.9 L321.1,388.0 L313.8,380.1 L306.4,373.0 L298.6,366.7 L290.5,361.1 L282.1,356.3 L273.3,352.2 L264.1,348.7 L254.5,345.7 L244.5,343.1 L234.3,340.9 L223.8,339.0 L213.2,337.3 L202.5,335.7 M357.9,430.1 L350.2,418.0 L342.8,406.6 L335.6,396.0 L328.5,386.3 L321.3,377.5 L313.9,369.6 L306.4,362.5 L298.5,356.3 L290.4,350.8 L281.8,346.1 L272.9,342.0 L263.6,338.6 L253.8,335.7 L243.8,333.2 L233.4,331.2 L222.7,329.4 L212.0,327.8 L201.1,326.3 M358.5,419.3 L350.7,407.2 L343.2,395.8 L335.9,385.3 L328.7,375.6 L321.4,366.8 L314.0,359.0 L306.3,351.9 L298.4,345.7 L290.1,340.3 L281.4,335.7 L272.4,331.7 L262.9,328.3 L253.1,325.5 L242.9,323.2 L232.4,321.2 L221.6,319.5 L210.7,318.0 L199.7,316.6 M359.2,408.2 L351.2,396.1 L343.6,384.8 L336.2,374.3 L328.8,364.6 L321.4,355.9 L313.9,348.1 L306.1,341.1 L298.1,335.0 L289.7,329.7 L280.9,325.1 L271.7,321.2 L262.2,317.9 L252.2,315.2 L241.9,312.9 L231.3,311.0 L220.4,309.4 L209.4,308.0 L198.3,306.8 M359.9,396.7 L351.8,384.7 L344.0,373.4 L336.4,363.0 L328.9,353.4 L321.3,344.8 L313.7,337.0 L305.8,330.1 L297.6,324.1 L289.1,318.8 L280.2,314.3 L271.0,310.5 L261.3,307.3 L251.2,304.6 L240.8,302.4 L230.1,300.6 L219.1,299.1 L208.0,297.8 L196.9,296.6 M360.6,384.9 L352.3,372.9 L344.3,361.8 L336.5,351.4 L328.9,342.0 L321.2,333.4 L313.4,325.7 L305.3,318.9 L297.0,312.9 L288.4,307.7 L279.4,303.3 L270.0,299.6 L260.3,296.4 L250.1,293.9 L239.6,291.7 L228.8,290.0 L217.8,288.6 L206.6,287.4 L195.4,286.2 M361.3,372.7 L352.8,360.8 L344.6,349.8 L336.6,339.6 L328.8,330.2 L320.9,321.8 L312.9,314.2 L304.8,307.4 L296.3,301.5 L287.6,296.4 L278.5,292.1 L269.0,288.4 L259.1,285.4 L248.9,282.9 L238.3,280.8 L227.4,279.2 L216.3,277.8 L205.1,276.6 L193.9,275.6 M362.0,360.0 L353.3,348.5 L344.8,337.7 L336.7,327.8 L328.6,318.7 L320.6,310.4 L312.4,303.0 L304.1,296.4 L295.5,290.6 L286.6,285.6 L277.4,281.3 L267.8,277.7 L257.8,274.7 L247.5,272.2 L236.9,270.1 L225.9,268.4 L214.8,267.0 L203.6,265.8 L192.3,264.7 M362.8,347.0 L353.7,335.8 L345.1,325.3 L336.7,315.7 L328.4,306.8 L320.1,298.8 L311.8,291.5 L303.3,285.1 L294.5,279.5 L285.5,274.6 L276.1,270.4 L266.4,266.8 L256.4,263.7 L246.0,261.2 L235.3,259.1 L224.4,257.4 L213.2,255.9 L202.0,254.7 L190.7,253.5 M363.6,333.4 L354.2,322.6 L345.3,312.5 L336.6,303.2 L328.0,294.6 L319.5,286.8 L311.0,279.8 L302.3,273.6 L293.4,268.1 L284.2,263.3 L274.7,259.1 L264.9,255.6 L254.8,252.6 L244.4,250.0 L233.6,247.9 L222.7,246.1 L211.5,244.6 L200.3,243.2 L189.0,242.0 M364.4,319.5 L354.7,309.1 L345.4,299.4 L336.4,290.4 L327.6,282.1 L318.9,274.6 L310.1,267.8 L301.2,261.8 L292.1,256.4 L282.8,251.7 L273.2,247.6 L263.3,244.1 L253.1,241.1 L242.6,238.6 L231.8,236.4 L220.9,234.6 L209.7,233.0 L198.5,231.5 L187.4,230.2 M365.3,305.0 L355.2,295.1 L345.5,285.8 L336.2,277.1 L327.1,269.2 L318.1,262.0 L309.0,255.5 L299.9,249.6 L290.6,244.4 L281.2,239.9 L271.5,235.9 L261.5,232.4 L251.2,229.4 L240.7,226.8 L229.9,224.6 L219.0,222.7 L207.9,221.0 L196.7,219.5 L185.6,218.1 M366.2,290.0 L355.7,280.5 L345.6,271.7 L336.0,263.5 L326.5,255.9 L317.2,249.0 L307.9,242.8 L298.5,237.1 L289.0,232.1 L279.4,227.7 L269.6,223.7 L259.5,220.3 L249.1,217.4 L238.6,214.8 L227.8,212.5 L216.9,210.5 L205.9,208.8 L194.8,207.2 L183.8,205.6 M367.1,274.4 L356.2,265.5 L345.7,257.1 L335.6,249.4 L325.8,242.2 L316.2,235.6 L306.6,229.6 L297.0,224.2 L287.3,219.4 L277.5,215.1 L267.5,211.3 L257.3,207.9 L246.9,204.9 L236.4,202.3 L225.6,200.1 L214.8,198.0 L203.8,196.2 L192.9,194.5 L182.0,192.8 M368.1,258.3 L356.6,249.9 L345.7,242.0 L335.2,234.7 L325.0,227.9 L315.0,221.7 L305.1,216.0 L295.3,210.9 L285.3,206.3 L275.3,202.1 L265.2,198.4 L255.0,195.1 L244.5,192.2 L234.0,189.5 L223.3,187.2 L212.5,185.1 L201.7,183.2 L190.8,181.4 L180.1,179.7 M369.1,241.5 L357.1,233.7 L345.7,226.4 L334.8,219.5 L324.2,213.2 L313.8,207.3 L303.6,202.0 L293.4,197.1 L283.2,192.7 L273.1,188.7 L262.8,185.1 L252.4,181.8 L242.0,178.9 L231.4,176.3 L220.8,174.0 L210.1,171.8 L199.4,169.8 L188.7,168.0 L178.2,166.2 M370.1,224.1 L357.6,216.9 L345.7,210.1 L334.3,203.8 L323.2,197.9 L312.4,192.4 L301.9,187.4 L291.4,182.8 L281.0,178.5 L270.6,174.7 L260.2,171.3 L249.7,168.1 L239.2,165.2 L228.7,162.7 L218.1,160.3 L207.5,158.1 L197.0,156.0 L186.5,154.1 L176.2,152.3 M371.2,205.9 L358.1,199.4 L345.7,193.2 L333.7,187.3 L322.2,181.9 L311.0,176.8 L300.0,172.2 L289.2,167.8 L278.5,163.9 L267.9,160.2 L257.4,156.9 L246.9,153.9 L236.3,151.1 L225.8,148.5 L215.3,146.1 L204.9,143.9 L194.5,141.8 L184.2,139.8 L174.2,137.9 M372.3,187.1 L358.6,181.1 L345.6,175.5 L333.1,170.2 L321.1,165.3 L309.4,160.6 L298.0,156.3 L286.9,152.3 L275.9,148.6 L265.1,145.2 L254.4,142.0 L243.8,139.1 L233.2,136.3 L222.8,133.8 L212.4,131.5 L202.1,129.2 L191.9,127.1 L181.9,125.1 L172.0,123.2 M373.4,167.4 L359.2,162.1 L345.5,157.1 L332.5,152.4 L319.9,147.9 L307.7,143.7 L295.9,139.8 L284.4,136.1 L273.1,132.6 L262.1,129.4 L251.2,126.4 L240.5,123.6 L230.0,121.0 L219.6,118.6 L209.3,116.2 L199.2,114.1 L189.2,112.0 L179.4,110.0 L169.9,108.0 M374.6,146.9 L359.7,142.3 L345.4,137.9 L331.7,133.7 L318.6,129.7 L305.9,126.0 L293.7,122.4 L281.8,119.1 L270.2,116.0 L258.9,113.0 L247.9,110.2 L237.1,107.6 L226.5,105.1 L216.2,102.7 L206.0,100.5 L196.1,98.3 L186.4,96.3 L176.9,94.3 L167.6,92.4 M375.9,125.6 L360.3,121.6 L345.3,117.8 L331.0,114.1 L317.2,110.7 L304.0,107.4 L291.3,104.3 L279.0,101.3 L267.1,98.5 L255.5,95.8 L244.4,93.2 L233.5,90.8 L222.9,88.4 L212.7,86.2 L202.7,84.0 L192.9,82.0 L183.5,80.0 L174.3,78.1 L165.3,76.2 M377.2,103.2 L360.9,99.9 L345.2,96.7 L330.2,93.7 L315.8,90.7 L302.0,87.9 L288.7,85.2 L276.0,82.6 L263.8,80.1 L252.0,77.7 L240.6,75.4 L229.7,73.2 L219.1,71.0 L209.0,69.0 L199.1,66.9 L189.6,65.0 L180.4,63.1 L171.5,61.3 L162.9,59.6" fill="none" stroke="#960c12" stroke-width="1"/>
<polygon points="368.1,258.3 362.3,254.0 356.6,249.9 351.1,245.9 345.7,242.0 340.4,238.3 335.2,234.7 330.1,231.3 325.0,227.9 320.0,224.8 315.0,221.7 310.1,218.8 305.1,216.0 300.2,213.4 295.3,210.9 290.3,208.5 285.3,206.3 280.4,204.1 275.3,202.1 270.3,200.2 265.2,198.4 260.1,196.7 255.0,195.1 249.8,193.6 244.5,192.2 239.3,190.8 234.0,189.5 228.6,188.3 223.3,187.2 217.9,186.1 212.5,185.1 207.1,184.1 201.7,183.2 196.2,182.3 190.8,181.4 185.5,180.5 180.1,179.7 195.8,171.2 201.0,171.5 206.2,171.8 211.4,172.2 216.7,172.5 221.9,172.9 227.2,173.4 232.4,173.9 237.7,174.4 242.9,175.1 248.1,175.8 253.3,176.7 258.5,177.6 263.7,178.7 268.8,179.8 273.8,181.1 278.9,182.5 283.9,184.1 288.9,185.8 293.9,187.7 298.8,189.7 303.7,191.8 308.7,194.2 313.6,196.7 318.5,199.3 323.4,202.1 328.3,205.1 333.2,208.3 338.2,211.6 343.2,215.0 348.3,218.7 353.5,222.5 358.7,226.4 364.0,230.5 369.4,234.7 374.9,239.1 380.6,243.5" fill="#980003"/>
<path d="M368.1,258.3 L380.6,243.5 M356.6,249.9 L369.4,234.7 M345.7,242.0 L358.7,226.4 M335.2,234.7 L348.3,218.7 M325.0,227.9 L338.2,211.6 M315.0,221.7 L328.3,205.1 M305.1,216.0 L318.5,199.3 M295.3,210.9 L308.7,194.2 M285.3,206.3 L298.8,189.7 M275.3,202.1 L288.9,185.8 M265.2,198.4 L278.9,182.5 M255.0,195.1 L268.8,179.8 M244.5,192.2 L258.5,177.6 M234.0,189.5 L248.1,175.8 M223.3,187.2 L237.7,174.4 M212.5,185.1 L227.2,173.4 M201.7,183.2 L216.7,172.5 M190.8,181.4 L206.2,171.8 M180.1,179.7 L195.8,171.2 M374.5,250.7 L368.7,246.4 L363.2,242.1 L357.7,238.0 L352.3,234.1 L347.1,230.2 L341.9,226.5 L336.8,223.0 L331.8,219.6 L326.8,216.4 L321.8,213.3 L316.8,210.3 L311.9,207.5 L307.0,204.9 L302.1,202.4 L297.1,200.0 L292.2,197.8 L287.2,195.8 L282.2,193.8 L277.2,192.0 L272.2,190.3 L267.1,188.8 L262.0,187.3 L256.8,186.0 L251.6,184.8 L246.4,183.6 L241.2,182.6 L235.9,181.6 L230.6,180.7 L225.3,179.9 L219.9,179.1 L214.6,178.4 L209.3,177.8 L203.9,177.1 L198.6,176.5 L193.4,176.0 L188.1,175.4 M368.1,258.3 L362.3,254.0 L356.6,249.9 L351.1,245.9 L345.7,242.0 L340.4,238.3 L335.2,234.7 L330.1,231.3 L325.0,227.9 L320.0,224.8 L315.0,221.7 L310.1,218.8 L305.1,216.0 L300.2,213.4 L295.3,210.9 L290.3,208.5 L285.3,206.3 L280.4,204.1 L275.3,202.1 L270.3,200.2 L265.2,198.4 L260.1,196.7 L255.0,195.1 L249.8,193.6 L244.5,192.2 L239.3,190.8 L234.0,189.5 L228.6,188.3 L223.3,187.2 L217.9,186.1 L212.5,185.1 L207.1,184.1 L201.7,183.2 L196.2,182.3 L190.8,181.4 L185.5,180.5 L180.1,179.7 M380.6,243.5 L374.9,239.1 L369.4,234.7 L364.0,230.5 L358.7,226.4 L353.5,222.5 L348.3,218.7 L343.2,215.0 L338.2,211.6 L333.2,208.3 L328.3,205.1 L323.4,202.1 L318.5,199.3 L313.6,196.7 L308.7,194.2 L303.7,191.8 L298.8,189.7 L293.9,187.7 L288.9,185.8 L283.9,184.1 L278.9,182.5 L273.8,181.1 L268.8,179.8 L263.7,178.7 L258.5,177.6 L253.3,176.7 L248.1,175.8 L242.9,175.1 L237.7,174.4 L232.4,173.9 L227.2,173.4 L221.9,172.9 L216.7,172.5 L211.4,172.2 L206.2,171.8 L201.0,171.5 L195.8,171.2" fill="none" stroke="#ae090d" stroke-width="1"/>
<polygon points="361.3,372.7 357.0,366.7 352.8,360.8 348.6,355.2 344.6,349.8 340.6,344.6 336.6,339.6 332.7,334.8 328.8,330.2 324.9,325.9 320.9,321.8 317.0,317.8 312.9,314.2 308.9,310.7 304.8,307.4 300.6,304.4 296.3,301.5 292.0,298.9 287.6,296.4 283.1,294.2 278.5,292.1 273.8,290.2 269.0,288.4 264.1,286.8 259.1,285.4 254.0,284.1 248.9,282.9 243.6,281.8 238.3,280.8 232.9,280.0 227.4,279.2 221.9,278.5 216.3,277.8 210.7,277.2 205.1,276.6 199.5,276.1 193.9,275.6 207.6,265.1 213.0,265.3 218.5,265.5 223.9,265.7 229.4,266.0 234.8,266.3 240.1,266.7 245.5,267.2 250.7,267.8 255.9,268.4 261.1,269.2 266.1,270.2 271.1,271.2 276.0,272.4 280.8,273.8 285.5,275.3 290.1,277.0 294.7,278.9 299.1,281.0 303.5,283.3 307.8,285.8 312.0,288.5 316.2,291.4 320.3,294.6 324.3,298.0 328.3,301.5 332.3,305.4 336.2,309.4 340.1,313.7 344.1,318.2 348.0,322.9 351.9,327.8 355.9,332.9 359.9,338.2 364.0,343.8 368.2,349.5 372.5,355.4" fill="#980003"/>
<path d="M361.3,372.7 L372.5,355.4 M352.8,360.8 L364.0,343.8 M344.6,349.8 L355.9,332.9 M336.6,339.6 L348.0,322.9 M328.8,330.2 L340.1,313.7 M320.9,321.8 L332.3,305.4 M312.9,314.2 L324.3,298.0 M304.8,307.4 L316.2,291.4 M296.3,301.5 L307.8,285.8 M287.6,296.4 L299.1,281.0 M278.5,292.1 L290.1,277.0 M269.0,288.4 L280.8,273.8 M259.1,285.4 L271.1,271.2 M248.9,282.9 L261.1,269.2 M238.3,280.8 L250.7,267.8 M227.4,279.2 L240.1,266.7 M216.3,277.8 L229.4,266.0 M205.1,276.6 L218.5,265.5 M193.9,275.6 L207.6,265.1 M367.0,363.8 L362.7,357.9 L358.5,352.1 L354.4,346.6 L350.4,341.2 L346.4,336.0 L342.4,331.1 L338.5,326.3 L334.6,321.8 L330.6,317.5 L326.7,313.4 L322.7,309.6 L318.7,305.9 L314.7,302.5 L310.6,299.3 L306.4,296.3 L302.2,293.6 L297.8,291.0 L293.4,288.6 L289.0,286.4 L284.4,284.5 L279.7,282.6 L275.0,281.0 L270.1,279.5 L265.2,278.2 L260.2,277.0 L255.0,275.9 L249.9,275.0 L244.6,274.2 L239.3,273.5 L233.9,272.9 L228.4,272.3 L222.9,271.8 L217.4,271.4 L211.9,271.0 L206.4,270.6 L200.8,270.3 M361.3,372.7 L357.0,366.7 L352.8,360.8 L348.6,355.2 L344.6,349.8 L340.6,344.6 L336.6,339.6 L332.7,334.8 L328.8,330.2 L324.9,325.9 L320.9,321.8 L317.0,317.8 L312.9,314.2 L308.9,310.7 L304.8,307.4 L300.6,304.4 L296.3,301.5 L292.0,298.9 L287.6,296.4 L283.1,294.2 L278.5,292.1 L273.8,290.2 L269.0,288.4 L264.1,286.8 L259.1,285.4 L254.0,284.1 L248.9,282.9 L243.6,281.8 L238.3,280.8 L232.9,280.0 L227.4,279.2 L221.9,278.5 L216.3,277.8 L210.7,277.2 L205.1,276.6 L199.5,276.1 L193.9,275.6 M372.5,355.4 L368.2,349.5 L364.0,343.8 L359.9,338.2 L355.9,332.9 L351.9,327.8 L348.0,322.9 L344.1,318.2 L340.1,313.7 L336.2,309.4 L332.3,305.4 L328.3,301.5 L324.3,298.0 L320.3,294.6 L316.2,291.4 L312.0,288.5 L307.8,285.8 L303.5,283.3 L299.1,281.0 L294.7,278.9 L290.1,277.0 L285.5,275.3 L280.8,273.8 L276.0,272.4 L271.1,271.2 L266.1,270.2 L261.1,269.2 L255.9,268.4 L250.7,267.8 L245.5,267.2 L240.1,266.7 L234.8,266.3 L229.4,266.0 L223.9,265.7 L218.5,265.5 L213.0,265.3 L207.6,265.1" fill="none" stroke="#ae090d" stroke-width="1"/>
<polygon points="356.1,460.6 352.3,454.5 348.6,448.6 345.0,442.9 341.4,437.4 337.9,432.0 334.4,426.9 330.9,422.0 327.4,417.3 324.0,412.8 320.4,408.5 316.9,404.4 313.3,400.5 309.7,396.8 306.0,393.3 302.2,390.0 298.4,386.9 294.5,384.0 290.5,381.3 286.4,378.7 282.3,376.3 278.0,374.1 273.7,372.0 269.2,370.1 264.7,368.3 260.1,366.6 255.4,365.1 250.6,363.7 245.8,362.3 240.8,361.1 235.8,359.9 230.8,358.8 225.7,357.8 220.6,356.8 215.4,355.8 210.2,354.9 205.1,353.9 217.3,342.2 222.3,342.6 227.2,343.0 232.2,343.5 237.2,343.9 242.1,344.5 247.1,345.1 251.9,345.8 256.7,346.6 261.5,347.5 266.1,348.5 270.8,349.7 275.3,351.0 279.7,352.4 284.1,354.0 288.4,355.8 292.6,357.8 296.7,360.0 300.8,362.3 304.8,364.9 308.6,367.7 312.5,370.7 316.2,373.9 319.9,377.4 323.5,381.0 327.1,385.0 330.7,389.1 334.2,393.4 337.7,398.0 341.2,402.8 344.7,407.9 348.1,413.1 351.7,418.5 355.2,424.2 358.8,430.0 362.5,436.0 366.2,442.2" fill="#980003"/>
<path d="M356.1,460.6 L366.2,442.2 M348.6,448.6 L358.8,430.0 M341.4,437.4 L351.7,418.5 M334.4,426.9 L344.7,407.9 M327.4,417.3 L337.7,398.0 M320.4,408.5 L330.7,389.1 M313.3,400.5 L323.5,381.0 M306.0,393.3 L316.2,373.9 M298.4,386.9 L308.6,367.7 M290.5,381.3 L300.8,362.3 M282.3,376.3 L292.6,357.8 M273.7,372.0 L284.1,354.0 M264.7,368.3 L275.3,351.0 M255.4,365.1 L266.1,348.5 M245.8,362.3 L256.7,346.6 M235.8,359.9 L247.1,345.1 M225.7,357.8 L237.2,343.9 M215.4,355.8 L227.2,343.0 M205.1,353.9 L217.3,342.2 M361.2,451.2 L357.5,445.1 L353.8,439.2 L350.2,433.4 L346.6,427.8 L343.1,422.4 L339.6,417.2 L336.1,412.3 L332.6,407.5 L329.1,403.0 L325.6,398.6 L322.1,394.5 L318.5,390.6 L314.9,387.0 L311.2,383.5 L307.4,380.2 L303.6,377.2 L299.7,374.4 L295.7,371.7 L291.6,369.2 L287.5,367.0 L283.3,364.9 L279.0,362.9 L274.6,361.2 L270.1,359.5 L265.5,358.0 L260.8,356.7 L256.1,355.5 L251.3,354.4 L246.4,353.3 L241.5,352.4 L236.5,351.6 L231.5,350.8 L226.5,350.0 L221.4,349.3 L216.3,348.7 L211.3,348.0 M356.1,460.6 L352.3,454.5 L348.6,448.6 L345.0,442.9 L341.4,437.4 L337.9,432.0 L334.4,426.9 L330.9,422.0 L327.4,417.3 L324.0,412.8 L320.4,408.5 L316.9,404.4 L313.3,400.5 L309.7,396.8 L306.0,393.3 L302.2,390.0 L298.4,386.9 L294.5,384.0 L290.5,381.3 L286.4,378.7 L282.3,376.3 L278.0,374.1 L273.7,372.0 L269.2,370.1 L264.7,368.3 L260.1,366.6 L255.4,365.1 L250.6,363.7 L245.8,362.3 L240.8,361.1 L235.8,359.9 L230.8,358.8 L225.7,357.8 L220.6,356.8 L215.4,355.8 L210.2,354.9 L205.1,353.9 M366.2,442.2 L362.5,436.0 L358.8,430.0 L355.2,424.2 L351.7,418.5 L348.1,413.1 L344.7,407.9 L341.2,402.8 L337.7,398.0 L334.2,393.4 L330.7,389.1 L327.1,385.0 L323.5,381.0 L319.9,377.4 L316.2,373.9 L312.5,370.7 L308.6,367.7 L304.8,364.9 L300.8,362.3 L296.7,360.0 L292.6,357.8 L288.4,355.8 L284.1,354.0 L279.7,352.4 L275.3,351.0 L270.8,349.7 L266.1,348.5 L261.5,347.5 L256.7,346.6 L251.9,345.8 L247.1,345.1 L242.1,344.5 L237.2,343.9 L232.2,343.5 L227.2,343.0 L222.3,342.6 L217.3,342.2" fill="none" stroke="#ae090d" stroke-width="1"/>
<polygon points="352.0,530.2 348.1,525.0 344.3,519.9 340.6,514.9 336.9,510.1 333.2,505.4 329.6,500.8 326.1,496.3 322.5,492.0 319.0,487.8 315.4,483.8 311.9,479.9 308.3,476.1 304.8,472.5 301.2,469.1 297.6,465.7 293.9,462.5 290.3,459.4 286.6,456.5 282.8,453.7 279.1,451.0 275.3,448.4 271.4,445.9 267.5,443.5 263.6,441.3 259.6,439.1 255.6,437.0 251.6,435.0 247.5,433.0 243.4,431.1 239.3,429.3 235.1,427.5 231.0,425.8 226.8,424.1 222.7,422.4 218.5,420.8 214.4,419.1 225.4,406.7 229.4,407.9 233.4,409.0 237.4,410.2 241.5,411.4 245.5,412.6 249.6,413.9 253.6,415.3 257.6,416.7 261.6,418.2 265.6,419.8 269.5,421.6 273.4,423.4 277.3,425.3 281.2,427.4 285.0,429.6 288.7,432.0 292.5,434.5 296.2,437.1 299.9,439.9 303.5,442.8 307.2,446.0 310.8,449.2 314.3,452.7 317.9,456.3 321.4,460.0 325.0,464.0 328.5,468.1 332.0,472.3 335.6,476.7 339.1,481.3 342.7,486.0 346.3,490.9 350.0,495.9 353.7,501.0 357.4,506.2 361.2,511.5" fill="#980003"/>
<path d="M352.0,530.2 L361.2,511.5 M344.3,519.9 L353.7,501.0 M336.9,510.1 L346.3,490.9 M329.6,500.8 L339.1,481.3 M322.5,492.0 L332.0,472.3 M315.4,483.8 L325.0,464.0 M308.3,476.1 L317.9,456.3 M301.2,469.1 L310.8,449.2 M293.9,462.5 L303.5,442.8 M286.6,456.5 L296.2,437.1 M279.1,451.0 L288.7,432.0 M271.4,445.9 L281.2,427.4 M263.6,441.3 L273.4,423.4 M255.6,437.0 L265.6,419.8 M247.5,433.0 L257.6,416.7 M239.3,429.3 L249.6,413.9 M231.0,425.8 L241.5,411.4 M222.7,422.4 L233.4,409.0 M214.4,419.1 L225.4,406.7 M356.7,520.7 L352.8,515.5 L349.1,510.3 L345.3,505.3 L341.7,500.3 L338.0,495.6 L334.5,490.9 L330.9,486.4 L327.3,482.0 L323.8,477.8 L320.2,473.8 L316.7,469.9 L313.2,466.1 L309.6,462.5 L306.0,459.0 L302.4,455.7 L298.8,452.6 L295.1,449.6 L291.4,446.7 L287.7,444.0 L284.0,441.4 L280.2,438.9 L276.3,436.6 L272.5,434.4 L268.5,432.2 L264.6,430.2 L260.6,428.3 L256.6,426.5 L252.6,424.8 L248.5,423.1 L244.5,421.5 L240.4,420.0 L236.3,418.5 L232.2,417.0 L228.1,415.6 L224.0,414.2 L220.0,412.9 M352.0,530.2 L348.1,525.0 L344.3,519.9 L340.6,514.9 L336.9,510.1 L333.2,505.4 L329.6,500.8 L326.1,496.3 L322.5,492.0 L319.0,487.8 L315.4,483.8 L311.9,479.9 L308.3,476.1 L304.8,472.5 L301.2,469.1 L297.6,465.7 L293.9,462.5 L290.3,459.4 L286.6,456.5 L282.8,453.7 L279.1,451.0 L275.3,448.4 L271.4,445.9 L267.5,443.5 L263.6,441.3 L259.6,439.1 L255.6,437.0 L251.6,435.0 L247.5,433.0 L243.4,431.1 L239.3,429.3 L235.1,427.5 L231.0,425.8 L226.8,424.1 L222.7,422.4 L218.5,420.8 L214.4,419.1 M361.2,511.5 L357.4,506.2 L353.7,501.0 L350.0,495.9 L346.3,490.9 L342.7,486.0 L339.1,481.3 L335.6,476.7 L332.0,472.3 L328.5,468.1 L325.0,464.0 L321.4,460.0 L317.9,456.3 L314.3,452.7 L310.8,449.2 L307.2,446.0 L303.5,442.8 L299.9,439.9 L296.2,437.1 L292.5,434.5 L288.7,432.0 L285.0,429.6 L281.2,427.4 L277.3,425.3 L273.4,423.4 L269.5,421.6 L265.6,419.8 L261.6,418.2 L257.6,416.7 L253.6,415.3 L249.6,413.9 L245.5,412.6 L241.5,411.4 L237.4,410.2 L233.4,409.0 L229.4,407.9 L225.4,406.7" fill="none" stroke="#ae090d" stroke-width="1"/>
<g stroke="#3fd7d7" fill="#3fd7d7" stroke-width="1.3">
<path d="M347.5,588.7 L335,577.7 M347.5,588.7 L358.5,578 M347.5,588.7 V580" fill="none"/>
<path d="M333.2,576.1 l5.4,1.4 -3.2,3.4z M360.3,576.4 l-5.4,1.4 3.2,3.4z M347.5,577 l-2.2,5 h4.4z" stroke="none"/>
</g>
<path d="M347.5,588.7 l-3,-4 3,-5z" fill="#d8e060"/>
<text x="326.8" y="576.3" font-family="Liberation Sans,sans-serif" font-size="8" font-weight="normal" fill="#3fd7d7">Y</text>
<text x="345" y="576.3" font-family="Liberation Sans,sans-serif" font-size="8" font-weight="normal" fill="#3fd7d7">Z</text>
<text x="360.8" y="576.3" font-family="Liberation Sans,sans-serif" font-size="8" font-weight="normal" fill="#3fd7d7">X</text>
  </svg></div>
</div>
</body>
</html>
